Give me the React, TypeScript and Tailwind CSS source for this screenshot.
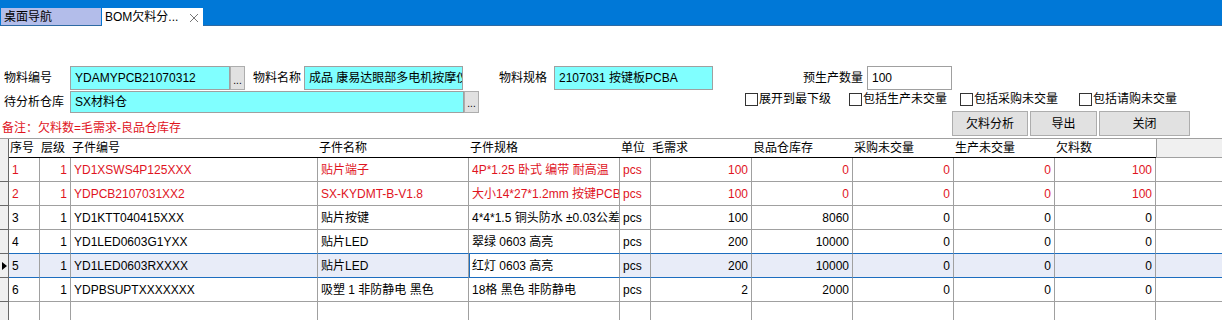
// BOM欠料分析 — 表单 + 明细表格

type Col = { key: string; title: string; w: string; right?: boolean };

const COLS: Col[] = [
  { key: "no", title: "序号", w: "w-[31px]" },
  { key: "lv", title: "层级", w: "w-[31px]", right: true },
  { key: "code", title: "子件编号", w: "w-[247px]" },
  { key: "name", title: "子件名称", w: "w-[151px]" },
  { key: "spec", title: "子件规格", w: "w-[151px]" },
  { key: "unit", title: "单位", w: "w-[31px]" },
  { key: "need", title: "毛需求", w: "w-[101px]", right: true },
  { key: "stock", title: "良品仓库存", w: "w-[101px]", right: true },
  { key: "po", title: "采购未交量", w: "w-[101px]", right: true },
  { key: "mo", title: "生产未交量", w: "w-[101px]", right: true },
  { key: "short", title: "欠料数", w: "w-[101px]", right: true },
];

type Row = Record<string, string> & { red?: string };

const ROWS: Row[] = [
  { no: "1", lv: "1", code: "YD1XSWS4P125XXX", name: "贴片端子", spec: "4P*1.25 卧式 编带 耐高温", unit: "pcs", need: "100", stock: "0", po: "0", mo: "0", short: "100", red: "1" },
  { no: "2", lv: "1", code: "YDPCB2107031XX2", name: "SX-KYDMT-B-V1.8", spec: "大小14*27*1.2mm 按键PCB", unit: "pcs", need: "100", stock: "0", po: "0", mo: "0", short: "100", red: "1" },
  { no: "3", lv: "1", code: "YD1KTT040415XXX", name: "贴片按键", spec: "4*4*1.5 铜头防水 ±0.03公差", unit: "pcs", need: "100", stock: "8060", po: "0", mo: "0", short: "0" },
  { no: "4", lv: "1", code: "YD1LED0603G1YXX", name: "贴片LED", spec: "翠绿 0603 高亮", unit: "pcs", need: "200", stock: "10000", po: "0", mo: "0", short: "0" },
  { no: "5", lv: "1", code: "YD1LED0603RXXXX", name: "贴片LED", spec: "红灯 0603 高亮", unit: "pcs", need: "200", stock: "10000", po: "0", mo: "0", short: "0" },
  { no: "6", lv: "1", code: "YDPBSUPTXXXXXXX", name: "吸塑 1 非防静电 黑色", spec: "18格 黑色 非防静电", unit: "pcs", need: "2", stock: "2000", po: "0", mo: "0", short: "0" },
];

const SELECTED = 4;

function Input({ w, value, white }: { w: string; value: string; white?: boolean }) {
  return (
    <div
      className={`${w} h-full shrink-0 border border-[#a0a0a0] ${white ? "bg-white" : "bg-[#80ffff]"} flex items-center pl-[4px] overflow-hidden whitespace-nowrap`}
    >
      {value}
    </div>
  );
}

function Dots() {
  return (
    <div className="w-[15px] h-full shrink-0 border border-[#adadad] bg-[#e1e1e1] flex items-end justify-center pb-[3px] text-[10px] leading-none">
      ...
    </div>
  );
}

function Check({ label, w }: { label: string; w: string }) {
  return (
    <div className={`${w} shrink-0 flex items-center gap-[1px]`}>
      <span className="w-[13px] h-[13px] border border-[#333333] bg-white shrink-0" />
      <span className="leading-[13px]">{label}</span>
    </div>
  );
}

export default function App() {
  return (
    <div className="w-[1222px] h-[320px] overflow-hidden bg-white text-[12px] text-black font-['Liberation_Sans','Noto_Sans_CJK_SC',sans-serif]">
      {/* 顶部标签栏 */}
      <div className="h-[26px] bg-[#0078d7] border-b border-[#2e6aa3] flex items-end pl-[1px] gap-[1px]">
        <div className="w-[100px] h-[17px] bg-[#b3bdea] flex items-center pl-[3px] text-[12px] leading-none">桌面导航</div>
        <div className="w-[101px] h-[18px] -mb-[1px] bg-white flex items-center pl-[3px] pr-[4px] leading-none">
          <span className="flex-1">BOM欠料分...</span>
          <svg width="10" height="10" viewBox="0 0 10 10" className="mt-[1px]">
            <path d="M1 1L9 9M9 1L1 9" stroke="#777" strokeWidth="1" />
          </svg>
        </div>
      </div>

      {/* 第一行 */}
      <div className="mt-[40px] flex h-[24px]">
        <div className="w-[70px] shrink-0 pl-[4px] flex items-center">物料编号</div>
        <Input w="w-[160px]" value="YDAMYPCB21070312" />
        <Dots />
        <div className="w-[59px] shrink-0 pl-[8px] flex items-center">物料名称</div>
        <Input w="w-[159px]" value="成品 康易达眼部多电机按摩仪" />
        <div className="w-[91px] shrink-0 pr-[7px] flex items-center justify-end">物料规格</div>
        <Input w="w-[159px]" value="2107031 按键板PCBA" />
        <div className="w-[154px] shrink-0 pr-[4px] flex items-center justify-end">预生产数量</div>
        <Input w="w-[85px]" value="100" white />
      </div>

      {/* 第二、三行 */}
      <div className="mt-[1px] flex h-[47px]">
        <div className="w-[479px] shrink-0 flex flex-col">
          <div className="flex h-[22px]">
            <div className="w-[70px] shrink-0 pl-[4px] flex items-center">待分析仓库</div>
            <Input w="w-[394px]" value="SX材料仓" />
            <Dots />
          </div>
          <div className="mt-[8px] pl-[2px] leading-[14px] text-[#e0141e]">备注：欠料数=毛需求-良品仓库存</div>
        </div>
        <div className="flex-1 flex flex-col">
          <div className="h-[20px] pt-[2px] pl-[266px] flex items-start">
            <Check w="w-[104px]" label="展开到最下级" />
            <Check w="w-[111px]" label="包括生产未交量" />
            <Check w="w-[119px]" label="包括采购未交量" />
            <Check w="w-[110px]" label="包括请购未交量" />
          </div>
          <div className="h-[25px] pl-[473px] flex gap-[2px]">
            <button className="w-[76px] h-full border border-[#adadad] bg-[#e1e1e1]">欠料分析</button>
            <button className="w-[67px] h-full border border-[#adadad] bg-[#e1e1e1]">导出</button>
            <button className="w-[91px] h-full border border-[#adadad] bg-[#e1e1e1]">关闭</button>
          </div>
        </div>
      </div>

      {/* 表格 */}
      <div className="border-t border-[#a0a0a0]">
        <div className="flex h-[19px]">
          <div className="w-[9px] shrink-0 bg-[#f0f0f0] border-r border-[#696969]" />
          <div className="flex border-b border-black">
            {COLS.map((c) => (
              <div key={c.key} className={`${c.w} shrink-0 pl-[1px] flex items-center whitespace-nowrap bg-white`}>
                {c.title}
              </div>
            ))}
          </div>
          <div className="flex-1 bg-[#f0f0f0] border-l border-[#a0a0a0] border-b border-b-[#a0a0a0]" />
        </div>

        {ROWS.map((r, i) => {
          const sel = i === SELECTED;
          const blueBottom = sel || i + 1 === SELECTED;
          const line = blueBottom ? "border-b-[#1c6dbf]" : "border-b-[#a0a0a0]";
          return (
            <div key={r.no} className={`flex h-[24px] ${r.red ? "text-[#e0141e]" : ""}`}>
              <div className="w-[9px] shrink-0 bg-[#f0f0f0] border-r border-b border-[#696969] flex items-center">
                {sel && (
                  <svg width="6" height="8" viewBox="0 0 6 8" className="ml-[2px]">
                    <path d="M0 0L5 4L0 8Z" fill="#000" />
                  </svg>
                )}
              </div>
              {COLS.map((c) => {
                const edit = sel && c.key === "spec";
                const beforeEdit = sel && c.key === "name";
                return (
                  <div
                    key={c.key}
                    className={`${c.w} shrink-0 border-r border-b border-r-[#a0a0a0] ${line} px-[3px] flex items-center overflow-hidden whitespace-nowrap ${
                      c.right ? "justify-end" : ""
                    } ${edit ? "bg-white border-r-[#1c6dbf] shadow-[inset_1px_0_0_#1c6dbf]" : sel ? "bg-[#e8ecf8]" : ""} ${
                      beforeEdit ? "border-r-[#1c6dbf]" : ""
                    }`}
                  >
                    {r[c.key]}
                  </div>
                );
              })}
              <div className={`flex-1 border-b ${line} ${sel ? "bg-[#e8ecf8]" : ""}`} />
            </div>
          );
        })}

        <div className="flex h-[19px]">
          <div className="w-[9px] shrink-0 bg-[#f0f0f0] border-r border-[#696969]" />
          {COLS.map((c) => (
            <div key={c.key} className={`${c.w} shrink-0 border-r border-[#a0a0a0]`} />
          ))}
          <div className="flex-1" />
        </div>
      </div>
    </div>
  );
}
